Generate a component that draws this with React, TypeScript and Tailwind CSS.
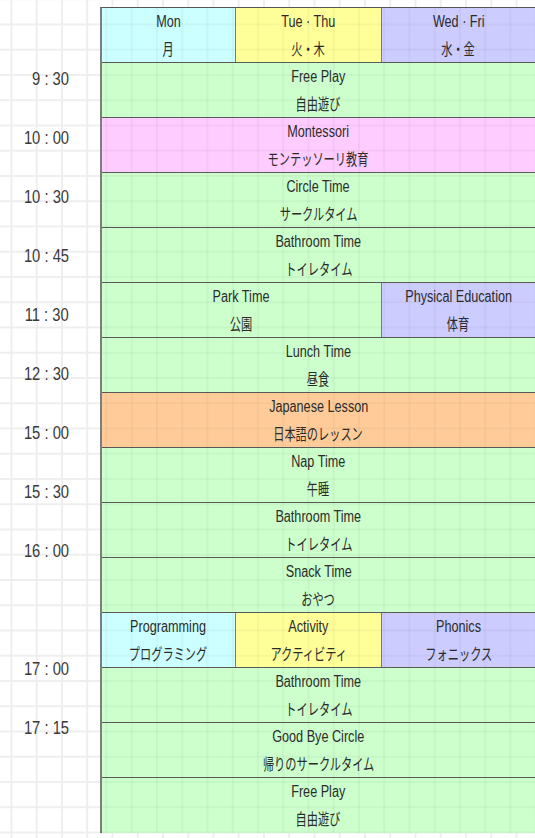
import React from 'react';

type Cell = { en: string; ja: string; color: string; span?: string };

const GREEN = 'bg-[#ccffcc]';
const CYAN = 'bg-[#ccffff]';
const YELLOW = 'bg-[#ffff99]';
const LAVENDER = 'bg-[#ccccff]';
const PINK = 'bg-[#ffccff]';
const ORANGE = 'bg-[#ffcc99]';

const rows: Cell[][] = [
  [
    { en: 'Mon', ja: '月', color: CYAN },
    { en: 'Tue · Thu', ja: '火・木', color: YELLOW },
    { en: 'Wed · Fri', ja: '水・金', color: LAVENDER },
  ],
  [{ en: 'Free Play', ja: '自由遊び', color: GREEN, span: 'col-span-3' }],
  [{ en: 'Montessori', ja: 'モンテッソーリ教育', color: PINK, span: 'col-span-3' }],
  [{ en: 'Circle Time', ja: 'サークルタイム', color: GREEN, span: 'col-span-3' }],
  [{ en: 'Bathroom Time', ja: 'トイレタイム', color: GREEN, span: 'col-span-3' }],
  [
    { en: 'Park Time', ja: '公園', color: GREEN, span: 'col-span-2' },
    { en: 'Physical Education', ja: '体育', color: LAVENDER },
  ],
  [{ en: 'Lunch Time', ja: '昼食', color: GREEN, span: 'col-span-3' }],
  [{ en: 'Japanese Lesson', ja: '日本語のレッスン', color: ORANGE, span: 'col-span-3' }],
  [{ en: 'Nap Time', ja: '午睡', color: GREEN, span: 'col-span-3' }],
  [{ en: 'Bathroom Time', ja: 'トイレタイム', color: GREEN, span: 'col-span-3' }],
  [{ en: 'Snack Time', ja: 'おやつ', color: GREEN, span: 'col-span-3' }],
  [
    { en: 'Programming', ja: 'プログラミング', color: CYAN },
    { en: 'Activity', ja: 'アクティビティ', color: YELLOW },
    { en: 'Phonics', ja: 'フォニックス', color: LAVENDER },
  ],
  [{ en: 'Bathroom Time', ja: 'トイレタイム', color: GREEN, span: 'col-span-3' }],
  [{ en: 'Good Bye Circle', ja: '帰りのサークルタイム', color: GREEN, span: 'col-span-3' }],
  [{ en: 'Free Play', ja: '自由遊び', color: GREEN, span: 'col-span-3' }],
];

const times = ['9 : 30', '10 : 00', '10 : 30', '10 : 45', '11 : 30', '12 : 30', '15 : 00', '15 : 30', '16 : 00', '', '17 : 00', '17 : 15'];

// faint sheet grid drawn over the coloured cells
const cellGrid =
  'bg-fixed bg-[linear-gradient(to_right,rgba(0,0,0,0.035)_2px,transparent_2px),linear-gradient(to_bottom,rgba(0,0,0,0.035)_2px,transparent_2px)] bg-size-[25.25px_25.25px] bg-position-[4.5px_-1.75px]';

function ScheduleCell({ cell, last }: { cell: Cell; last: boolean }) {
  return (
    <div
      className={`${cell.color} ${cellGrid} ${cell.span ?? ''} ${last ? '' : 'border-r border-[#7a7a7a]'} flex flex-col items-center pt-[1px] text-[#2b2b2b]`}
    >
      <span className="inline-block leading-[26px] text-[16px] scale-x-[0.79] whitespace-nowrap font-['Liberation_Sans',sans-serif]">
        {cell.en}
      </span>
      <span className="inline-block leading-[26px] text-[16px] scale-x-[0.7] whitespace-nowrap font-['Noto_Sans_CJK_JP',sans-serif]">
        {cell.ja}
      </span>
    </div>
  );
}

export default function App() {
  return (
    <div className="h-[838px] w-[535px] overflow-hidden bg-white bg-fixed bg-[linear-gradient(to_right,#eeeeee_2px,transparent_2px),linear-gradient(to_bottom,#eeeeee_2px,transparent_2px)] bg-size-[25.25px_25.25px] bg-position-[10.5px_-1.75px]">
      <div className="flex pt-[7px]">
        {/* time labels */}
        <div className="w-[100px] shrink-0 pt-[43px]">
          {times.map((t, i) => (
            <div key={i} className="h-[59px] flex items-center justify-end pr-[31px]">
              <span className="inline-block origin-right scale-x-[0.82] text-[18px] text-[#3a3a3a] font-['Liberation_Sans',sans-serif]">
                {t}
              </span>
            </div>
          ))}
        </div>

        {/* timetable */}
        <div className="flex-1 h-[826px] border-l-2 border-[#7d7d7d] border-t border-t-[#555] border-b-2 border-b-[#666]">
          {rows.map((row, i) => (
            <div
              key={i}
              className={`grid grid-cols-[134px_146px_1fr] h-[55px] ${i < rows.length - 1 ? 'border-b border-[#595959]' : ''}`}
            >
              {row.map((cell, j) => (
                <ScheduleCell key={j} cell={cell} last={j === row.length - 1} />
              ))}
            </div>
          ))}
        </div>
      </div>
    </div>
  );
}
